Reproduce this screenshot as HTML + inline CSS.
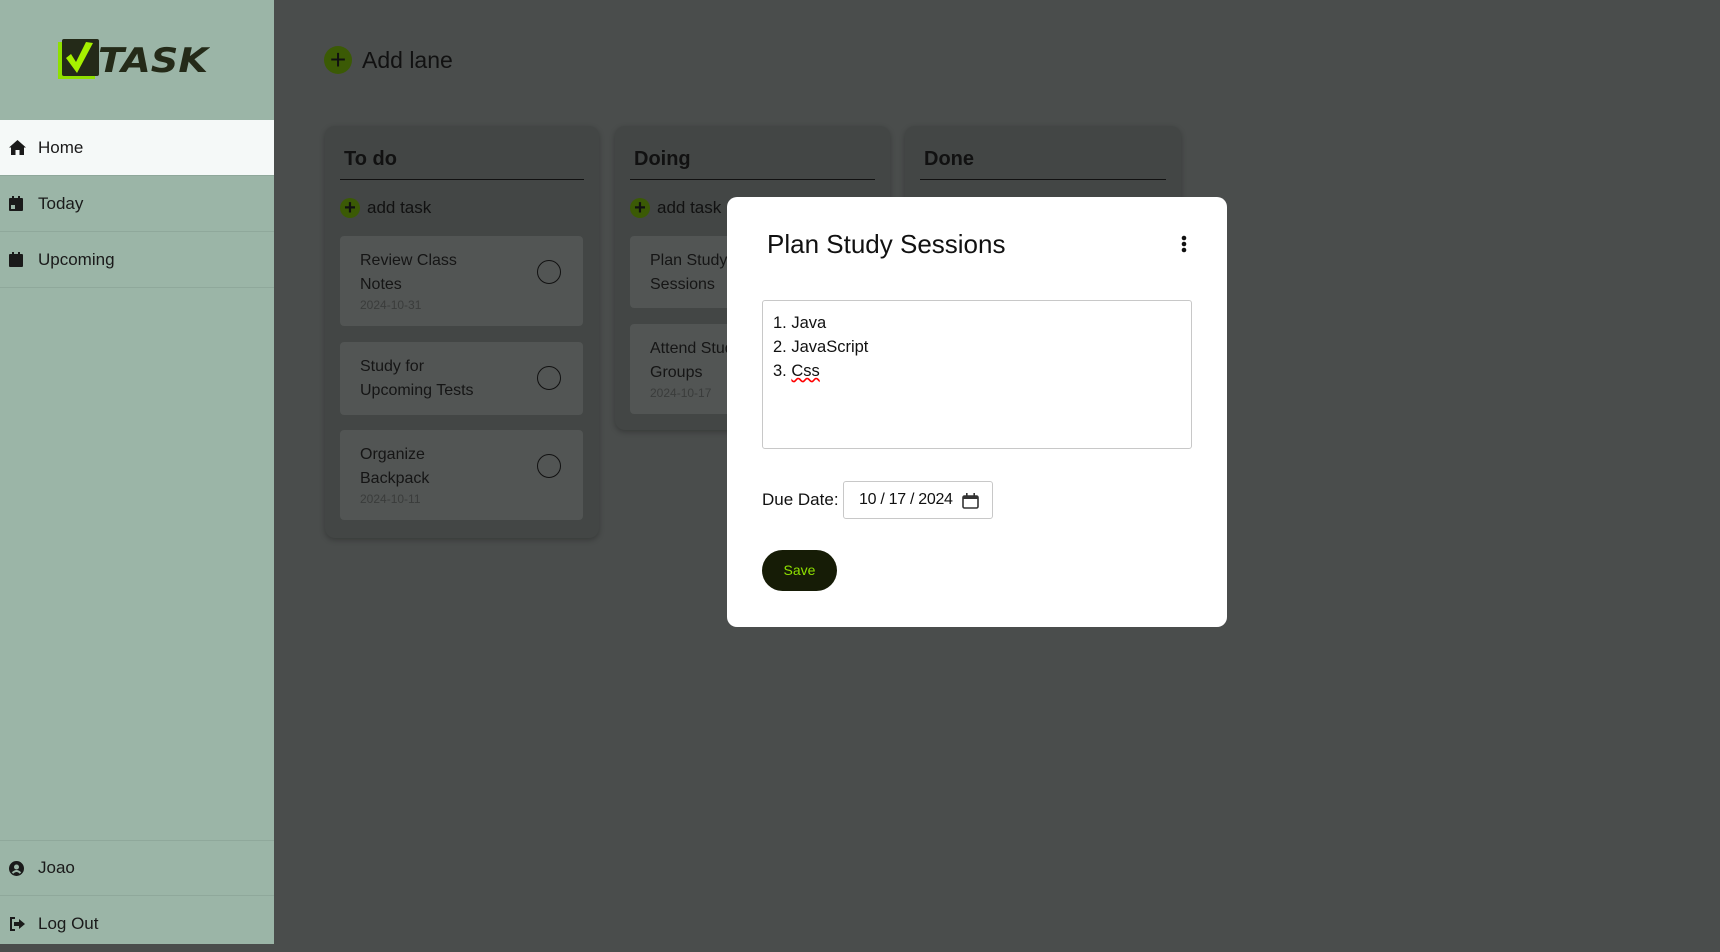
<!DOCTYPE html>
<html><head><meta charset="utf-8"><style>
*{box-sizing:border-box;margin:0;padding:0}
html{background:#4a4d4c}
body{width:1720px;height:944px;overflow:hidden;font-family:"Liberation Sans",sans-serif;background:#4a4d4c;position:relative;color:#111}
.side{position:absolute;left:0;top:0;width:274px;height:100%;min-height:944px;background:#9bb5a7}
.nav{position:absolute;left:0;width:274px;height:56px;border-bottom:1px solid #8fa89b;display:flex;align-items:center;font-size:17px;color:#1a1a1a}
.nav svg{position:absolute;left:9px}
.nav span{position:absolute;left:38px}
.lane{position:absolute;background:#434645;border-radius:10px;box-shadow:0 2px 6px rgba(0,0,0,.25)}
.lt{position:absolute;left:19px;top:22px;font-size:20px;font-weight:bold;color:#111}
.ul{position:absolute;left:15px;right:15px;top:53px;border-top:1.5px solid #111}
.add{position:absolute;left:15px;top:72px;font-size:17px;color:#111;display:flex;align-items:center}
.pc{width:20px;height:20px;border-radius:50%;background:#3b5a05;color:#111;font-size:20px;line-height:20px;text-align:center;margin-right:7px;font-weight:bold}
.card{position:absolute;left:15px;width:243px;background:#525554;border-radius:4px;padding:13px 20px;font-size:16px;line-height:24px;color:#151515}
.card small{display:block;font-size:12px;line-height:16px;color:#3a3c3b}
.card i{position:absolute;right:22px;top:24px;width:24px;height:24px;border:1.5px solid #111;border-radius:50%}
.modal{position:absolute;left:727px;top:197px;width:500px;height:430px;background:#fff;border-radius:10px}
</style></head><body>
<div class="side">
<svg style="position:absolute;left:58px;top:38px" width="152" height="44" viewBox="0 0 152 44">
<rect x="0" y="4" width="37" height="37" fill="#8fe000"/>
<rect x="4" y="1" width="37" height="37" rx="2" fill="#242a18"/>
<path d="M8 20 L13 16 L18 24 L28 4 L35 5 L19 35 Z" fill="#a6f000"/>
<text x="40" y="34" font-family="DejaVu Sans" font-weight="bold" font-style="italic" font-size="34" fill="#242a18" textLength="110" lengthAdjust="spacingAndGlyphs">TASK</text>
</svg>
<div class="nav" style="top:120px;background:#f5f9f8">
<svg width="17" height="15" viewBox="0 0 17 15"><path d="M8.5 0 L17 7.5 L15 7.5 L15 15 L10.5 15 L10.5 10 L6.5 10 L6.5 15 L2 15 L2 7.5 L0 7.5 Z" fill="#1a1a1a"/></svg><span>Home</span></div>
<div class="nav" style="top:176px"><svg width="14" height="15" viewBox="0 0 14 15"><rect x="0" y="2" width="14" height="13" rx="1" fill="#1a1a1a"/><rect x="3" y="0" width="2" height="4" fill="#1a1a1a"/><rect x="9" y="0" width="2" height="4" fill="#1a1a1a"/><rect x="2" y="9" width="4" height="4" fill="#9bb5a7"/></svg><span>Today</span></div>
<div class="nav" style="top:232px"><svg width="14" height="15" viewBox="0 0 14 15"><rect x="0" y="2" width="14" height="13" rx="1" fill="#1a1a1a"/><rect x="3" y="0" width="2" height="4" fill="#1a1a1a"/><rect x="9" y="0" width="2" height="4" fill="#1a1a1a"/></svg><span>Upcoming</span></div>
<div class="nav" style="top:840px;border-top:1px solid #8fa89b"><svg width="15" height="15" viewBox="0 0 15 15"><circle cx="7.5" cy="7.5" r="7.5" fill="#1a1a1a"/><circle cx="7.5" cy="6" r="2.5" fill="#9bb5a7"/><path d="M3.5 12 Q7.5 8 11.5 12" stroke="#9bb5a7" stroke-width="2" fill="none"/></svg><span>Joao</span></div>
<div class="nav" style="top:896px;border-bottom:none"><svg width="16" height="14" viewBox="0 0 16 14"><path d="M6 1 H2 V13 H6" stroke="#1a1a1a" stroke-width="2" fill="none"/><path d="M5 5 H10 V2 L16 7 L10 12 V9 H5 Z" fill="#1a1a1a"/></svg><span>Log Out</span></div>
</div>
<div style="position:absolute;left:324px;top:46px;width:28px;height:28px;border-radius:50%;background:#3b5a05;color:#111;font-size:28px;line-height:27px;text-align:center">+</div>
<div style="position:absolute;left:362px;top:47px;font-size:23px;color:#111">Add lane</div>

<div class="lane" style="left:325px;top:126px;width:274px;height:412px">
<div class="lt">To do</div><div class="ul"></div>
<div class="add"><div class="pc">+</div>add task</div>
<div class="card" style="top:110px;height:90px">Review Class<br>Notes<small>2024-10-31</small><i></i></div>
<div class="card" style="top:216px;height:73px">Study for<br>Upcoming Tests<i></i></div>
<div class="card" style="top:304px;height:90px">Organize<br>Backpack<small>2024-10-11</small><i></i></div>
</div>
<div class="lane" style="left:615px;top:126px;width:275px;height:304px">
<div class="lt">Doing</div><div class="ul"></div>
<div class="add"><div class="pc">+</div>add task</div>
<div class="card" style="top:110px;height:72px">Plan Study<br>Sessions</div>
<div class="card" style="top:198px;height:90px">Attend Study<br>Groups<small>2024-10-17</small></div>
</div>
<div class="lane" style="left:905px;top:126px;width:276px;height:110px">
<div class="lt">Done</div><div class="ul"></div>
</div>

<div class="modal">
<div style="position:absolute;left:40px;top:32px;font-size:26px;color:#111">Plan Study Sessions</div>
<svg style="position:absolute;left:454px;top:38px" width="6" height="18" viewBox="0 0 6 18"><circle cx="3" cy="3" r="2.3" fill="#111"/><circle cx="3" cy="9" r="2.3" fill="#111"/><circle cx="3" cy="15" r="2.3" fill="#111"/></svg>
<div style="position:absolute;left:35px;top:103px;width:430px;height:149px;border:1px solid #c8c8c8;border-radius:3px;padding:10px;font-size:16.5px;line-height:24px;color:#111">1. Java<br>2. JavaScript<br>3. <span style="text-decoration:underline wavy red">Css</span></div>
<div style="position:absolute;left:35px;top:293px;font-size:17px;color:#111">Due Date:</div>
<div style="position:absolute;left:116px;top:284px;width:150px;height:38px;border:1px solid #c8c8c8;border-radius:3px;font-size:16px;line-height:36px;padding-left:15px;color:#111;letter-spacing:-0.3px">10 / 17 / 2024
<svg style="position:absolute;left:118px;top:11px" width="17" height="16" viewBox="0 0 17 16"><rect x="1" y="3" width="15" height="12" rx="1.5" stroke="#333" stroke-width="1.6" fill="none"/><rect x="1" y="3" width="15" height="3" fill="#333"/><rect x="4" y="0" width="1.6" height="4" fill="#333"/><rect x="11.4" y="0" width="1.6" height="4" fill="#333"/></svg></div>
<div style="position:absolute;left:35px;top:353px;width:75px;height:41px;border-radius:21px;background:#161c06;color:#8ee000;font-size:14px;line-height:41px;text-align:center">Save</div>
</div>
</body></html>
